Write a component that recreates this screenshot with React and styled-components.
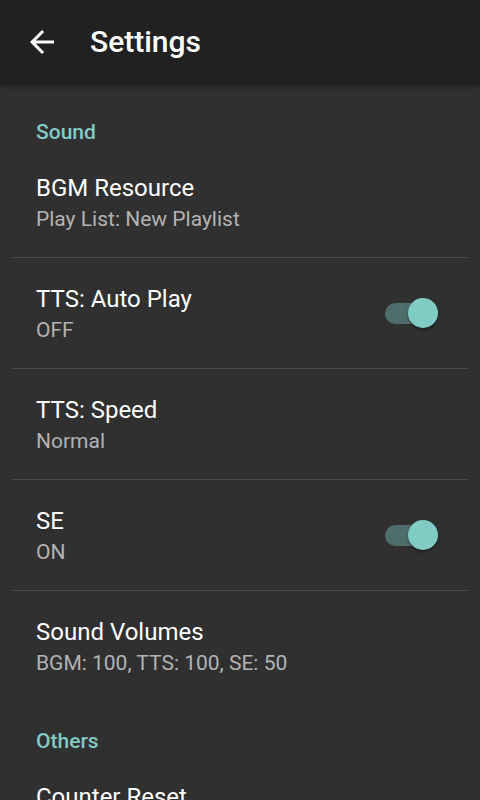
import React from "react";
import styled, { createGlobalStyle } from "styled-components";

const GlobalStyle = createGlobalStyle`
    html, body {
        margin: 0;
        padding: 0;
        background: #303030;
    }
    body {
        font-family: Roboto, "Noto Sans", "Liberation Sans", sans-serif;
        -webkit-font-smoothing: antialiased;
    }
`;

const Screen = styled.div`
    width: 480px;
    height: 800px;
    overflow: hidden;
    background: #303030;
    display: flex;
    flex-direction: column;
`;

const Toolbar = styled.header`
    height: 84px;
    flex-shrink: 0;
    background: #212121;
    display: flex;
    align-items: center;
    box-shadow: 0 2px 5px rgba(0, 0, 0, 0.35);
    position: relative;
    z-index: 1;
`;

const BackButton = styled.button`
    width: 36px;
    height: 36px;
    margin-left: 24px;
    margin-right: 30px;
    padding: 0;
    border: none;
    background: none;
    display: flex;
    align-items: center;
    justify-content: center;
    color: #fff;
`;

const Title = styled.h1`
    margin: 0;
    font-size: 30px;
    font-weight: 500;
    color: #fff;
    line-height: 36px;
`;

const List = styled.div`
    padding-top: 9px;
    display: flex;
    flex-direction: column;
`;

const Category = styled.div`
    padding: 27px 36px 3px;
    font-size: 21px;
    line-height: 24px;
    font-weight: 500;
    color: #80cbc4;
`;

const Row = styled.div`
    display: flex;
    align-items: center;
    padding: 26px 42px 22px 36px;
    border-bottom: 1px solid transparent;
    position: relative;

    &::after {
        content: "";
        display: ${(p) => (p.$last ? "none" : "block")};
        position: absolute;
        left: 12px;
        right: 12px;
        bottom: -1px;
        height: 1px;
        background: #484848;
    }
`;

const RowText = styled.div`
    flex: 1;
    display: flex;
    flex-direction: column;
`;

const RowTitle = styled.div`
    font-size: 24px;
    line-height: 30px;
    color: #fff;
`;

const RowSummary = styled.div`
    font-size: 21px;
    line-height: 32px;
    color: #b3b3b3;
`;

const Switch = styled.div`
    position: relative;
    width: 53px;
    height: 30px;
    margin-bottom: 4px;
    display: flex;
    align-items: center;
`;

const Track = styled.div`
    width: 51px;
    height: 21px;
    border-radius: 11px;
    background: ${(p) => (p.$on ? "#4f6e6b" : "#5c5c5c")};
`;

const Thumb = styled.div`
    position: absolute;
    top: 0;
    left: ${(p) => (p.$on ? "23px" : "0")};
    width: 30px;
    height: 30px;
    border-radius: 50%;
    background: ${(p) => (p.$on ? "#80cbc4" : "#bdbdbd")};
    box-shadow: 0 2px 3px rgba(0, 0, 0, 0.4);
`;

function Toggle({ on }) {
    return (
        <Switch>
            <Track $on={on} />
            <Thumb $on={on} />
        </Switch>
    );
}

function Pref({ title, summary, toggle, last }) {
    return (
        <Row $last={last}>
            <RowText>
                <RowTitle>{title}</RowTitle>
                {summary && <RowSummary>{summary}</RowSummary>}
            </RowText>
            {toggle !== undefined && <Toggle on={toggle} />}
        </Row>
    );
}

const BackArrow = () => (
    <svg width="36" height="36" viewBox="0 0 24 24" fill="currentColor">
        <path d="M20 11H7.83l5.59-5.59L12 4l-8 8 8 8 1.41-1.41L7.83 13H20v-2z" />
    </svg>
);

export default function App() {
    return (
        <Screen>
            <GlobalStyle />
            <Toolbar>
                <BackButton aria-label="back">
                    <BackArrow />
                </BackButton>
                <Title>Settings</Title>
            </Toolbar>
            <List>
                <Category>Sound</Category>
                <Pref title="BGM Resource" summary="Play List: New Playlist" />
                <Pref title="TTS: Auto Play" summary="OFF" toggle={true} />
                <Pref title="TTS: Speed" summary="Normal" />
                <Pref title="SE" summary="ON" toggle={true} />
                <Pref title="Sound Volumes" summary="BGM: 100, TTS: 100, SE: 50" last />
                <Category>Others</Category>
                <Pref title="Counter Reset" last />
            </List>
        </Screen>
    );
}
